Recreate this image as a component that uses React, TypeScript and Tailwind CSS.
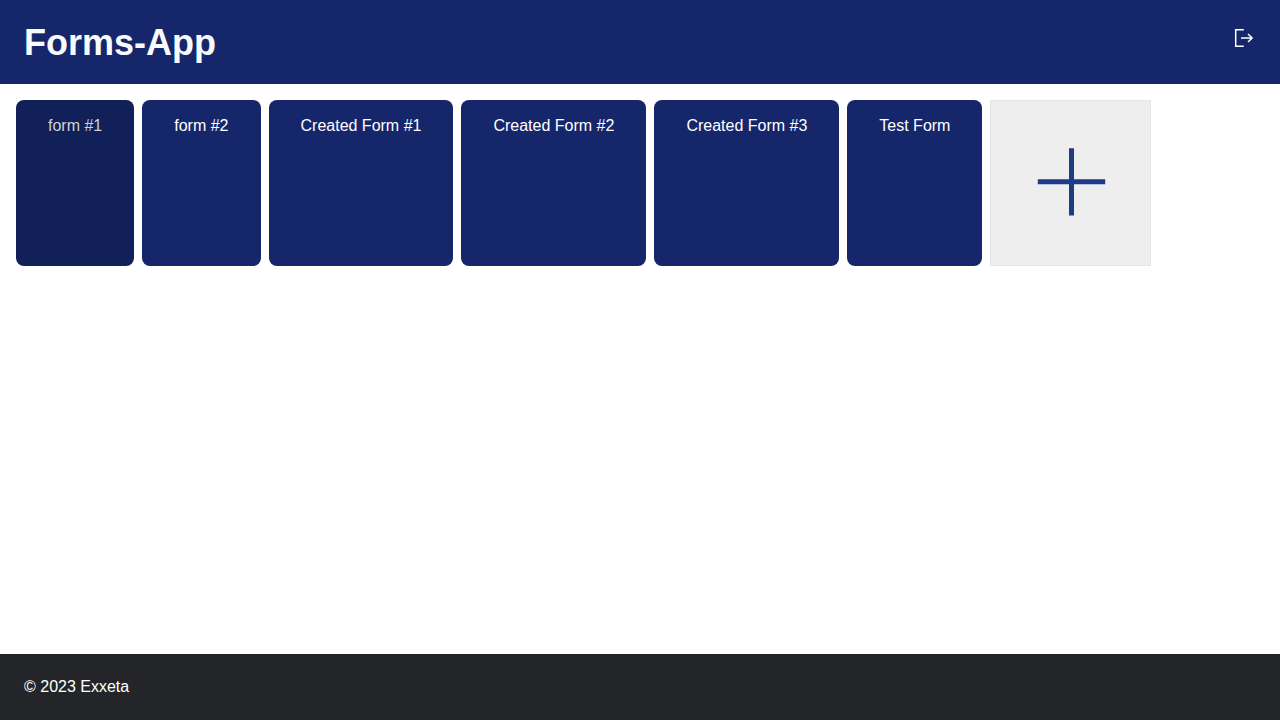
const forms = ["form #1", "form #2", "Created Form #1", "Created Form #2", "Created Form #3", "Test Form"];

export default function App() {
  return (
    <div className="flex min-h-screen flex-col bg-white font-['Liberation_Sans',Arial,sans-serif] text-base text-white">
      <header className="flex items-start justify-between bg-[#16266b] px-6 pt-[22px] pb-[21px]">
        <h1 className="text-4xl leading-[41px] font-bold text-[#f9fafb]">Forms-App</h1>
        <button type="button" aria-label="Log out" className="mt-1 cursor-pointer">
          <svg className="size-6" viewBox="0 0 24 24" fill="none" stroke="currentColor" strokeWidth="1.5">
            <path d="M11.8 3.7H3.7v16.6h8.1" />
            <path d="M9 12h11.2M16 8l4.1 4-4.1 4" />
          </svg>
        </button>
      </header>
      <main className="flex grow flex-wrap content-start gap-2 p-4">
        {forms.map((name, i) => (
          <a
            key={name}
            href="#"
            className={
              i === 0
                ? "rounded-lg bg-[#112058] px-8 py-4 leading-5 text-[#d1d1d1]"
                : "rounded-lg bg-[#16266b] px-8 py-4 leading-5"
            }
          >
            {name}
          </a>
        ))}
        <button
          type="button"
          aria-label="Create form"
          className="flex h-[166px] w-[161px] cursor-pointer items-center justify-center border border-[#e5e5e5] bg-[#eeeeee] text-[#1e3a8a]"
        >
          <svg className="h-20 w-[81px]" viewBox="0 0 81 80" stroke="currentColor" strokeWidth="5">
            <path d="M41.5 5.3v67.3M7.8 38.8h67.4" />
          </svg>
        </button>
      </main>
      <footer className="bg-[#242529] px-6 pt-[21px] pb-[21px]">© 2023 Exxeta</footer>
    </div>
  );
}
